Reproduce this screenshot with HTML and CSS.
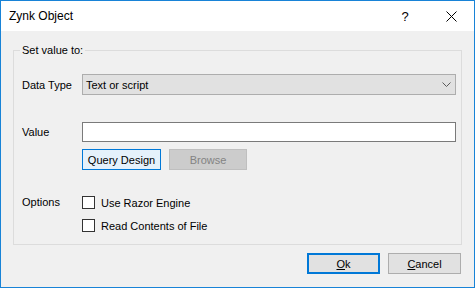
FILE: index.html
```html
<!DOCTYPE html>
<html lang="en">
<head>
    <title>Zynk Object</title>
    <link rel="stylesheet" href="styles.css">
</head>
<body>
<div class="window">
    <div class="titlebar">
        <span class="title">Zynk Object</span>
        <div class="caption-buttons">
            <span class="caption-btn help">?</span>
            <span class="caption-btn close">
                <svg width="11" height="11" viewBox="0 0 11 11">
                    <path d="M0.5 0.5 L10.5 10.5 M10.5 0.5 L0.5 10.5" stroke="#000" stroke-width="1" fill="none"/>
                </svg>
            </span>
        </div>
    </div>

    <div class="dialog-body">
        <fieldset class="group">
            <legend>Set value to:</legend>
            <div class="group-content">
                <div class="row row-type">
                    <label class="field-label">Data Type</label>
                    <div class="combo">
                        <span>Text or script</span>
                        <svg class="chevron" width="9" height="5" viewBox="0 0 9 5">
                            <path d="M0.5 0.5 L4.5 4.5 L8.5 0.5" stroke="#5a5a5a" stroke-width="1" fill="none"/>
                        </svg>
                    </div>
                </div>

                <div class="row row-value">
                    <label class="field-label">Value</label>
                    <div class="textbox"></div>
                </div>

                <div class="row row-buttons">
                    <span class="field-label"></span>
                    <div class="button-pair">
                        <button class="btn btn-focus">Query Design</button>
                        <button class="btn btn-disabled">Browse</button>
                    </div>
                </div>

                <div class="row row-options">
                    <label class="field-label">Options</label>
                    <div class="checks">
                        <div class="check"><span class="box"></span>Use Razor Engine</div>
                        <div class="check"><span class="box"></span>Read Contents of File</div>
                    </div>
                </div>
            </div>
        </fieldset>

        <div class="footer">
            <button class="btn btn-default"><u>O</u>k</button>
            <button class="btn"><u>C</u>ancel</button>
        </div>
    </div>
</div>
</body>
</html>
```

FILE: styles.css
```css
body {
    margin: 0;
    font-family: "Liberation Sans", Arial, sans-serif;
    font-size: 11px;
    color: #000;
}
.window {
    width: 475px;
    height: 288px;
    box-sizing: border-box;
    border: 1px solid #1883d7;
    display: flex;
    flex-direction: column;
    background-color: #fff;
}
.titlebar {
    height: 30px;
    display: flex;
    align-items: center;
    justify-content: space-between;
    padding-left: 8px;
}
.title {
    font-size: 12px;
}
.caption-buttons {
    display: flex;
    height: 30px;
}
.caption-btn {
    width: 46px;
    height: 30px;
    display: flex;
    align-items: center;
    justify-content: center;
}
.help {
    font-size: 13px;
    padding-top: 1px;
    box-sizing: border-box;
}
.dialog-body {
    flex: 1;
    background-color: #f0f0f0;
    padding: 12px 12px 0 12px;
}
.group {
    margin: 0;
    padding: 0;
    border: 1px solid #dcdcdc;
    height: 202px;
    box-sizing: border-box;
    min-width: 0;
}
.group legend {
    margin-left: 6px;
    padding: 0 2px;
    line-height: 14px;
    font-size: 11px;
}
.group-content {
    padding: 0 5px 0 8px;
}
.row {
    display: flex;
    align-items: center;
}
.field-label {
    width: 60px;
    flex-shrink: 0;
}
.row-type {
    margin-top: 17px;
}
.row-value {
    margin-top: 27px;
}
.row-buttons {
    margin-top: 7px;
}
.row-options {
    margin-top: 26px;
    align-items: flex-start;
}
.row-options .field-label {
    line-height: 13px;
}
.combo {
    flex: 1;
    height: 21px;
    box-sizing: border-box;
    border: 1px solid #adadad;
    background-color: #e1e1e1;
    display: flex;
    align-items: center;
    justify-content: space-between;
    padding: 0 4px 0 3px;
}
.chevron {
    margin-right: 0;
}
.textbox {
    flex: 1;
    height: 20px;
    box-sizing: border-box;
    border: 1px solid #7a7a7a;
    background-color: #fff;
}
.button-pair {
    display: flex;
    gap: 8px;
}
.btn {
    height: 21px;
    box-sizing: border-box;
    border: 1px solid #adadad;
    background-color: #e1e1e1;
    font-family: "Liberation Sans", Arial, sans-serif;
    font-size: 11px;
    color: #000;
    padding: 0;
    width: 73px;
}
.btn-focus {
    width: 79px;
    border-color: #0078d7;
    background-color: #e5f1fb;
}
.btn-disabled {
    width: 78px;
    border-color: #bfbfbf;
    background-color: #cccccc;
    color: #838383;
}
.btn-default {
    border: 2px solid #0078d7;
}
.checks {
    display: flex;
    flex-direction: column;
    gap: 10px;
}
.check {
    display: flex;
    align-items: center;
    height: 13px;
}
.box {
    width: 13px;
    height: 13px;
    box-sizing: border-box;
    border: 1px solid #333;
    background-color: #fff;
    margin-right: 6px;
}
.footer {
    display: flex;
    justify-content: flex-end;
    gap: 8px;
    margin-top: 8px;
    padding-right: 1px;
}
```
